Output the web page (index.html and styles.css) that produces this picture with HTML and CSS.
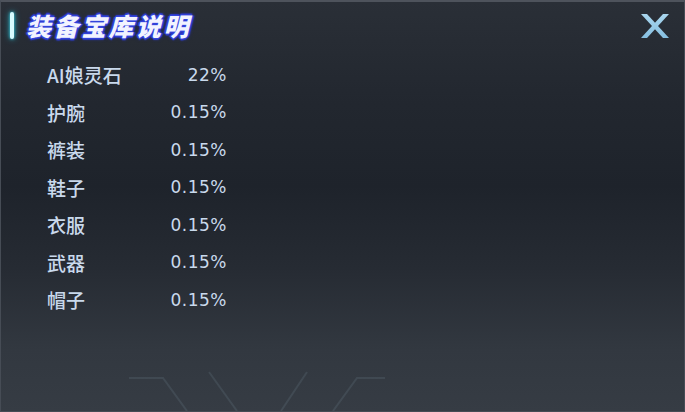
FILE: index.html
```html
<!DOCTYPE html>
<html lang="zh-CN">
<head>
    <meta charset="UTF-8">
    <meta name="viewport" content="width=device-width, initial-scale=1.0">
    <title>装备宝库说明</title>
    <link rel="stylesheet" href="styles.css">
</head>
<body>
    <div class="panel">
        <div class="header">
            <span class="accent"></span>
            <h1 class="title">装备宝库说明</h1>
            <button class="close" aria-label="关闭">
                <svg width="32" height="26" viewBox="0 0 32 26">
                    <defs>
                        <linearGradient id="xg" x1="0" y1="0" x2="0" y2="1">
                            <stop offset="0" stop-color="#a9d6ee"/>
                            <stop offset="1" stop-color="#86bfe0"/>
                        </linearGradient>
                    </defs>
                    <polygon points="2,1 8,1 30,25 24,25" fill="url(#xg)"/>
                    <polygon points="24,1 30,1 8,25 2,25" fill="url(#xg)"/>
                </svg>
            </button>
        </div>

        <ul class="rates">
            <li><span class="name">AI娘灵石</span><span class="value">22%</span></li>
            <li><span class="name">护腕</span><span class="value">0.15%</span></li>
            <li><span class="name">裤装</span><span class="value">0.15%</span></li>
            <li><span class="name">鞋子</span><span class="value">0.15%</span></li>
            <li><span class="name">衣服</span><span class="value">0.15%</span></li>
            <li><span class="name">武器</span><span class="value">0.15%</span></li>
            <li><span class="name">帽子</span><span class="value">0.15%</span></li>
        </ul>

        <!-- faint circuit lines along the bottom edge -->
        <svg class="circuit" width="685" height="45" viewBox="0 0 685 45">
            <g fill="none" stroke="rgba(150,175,195,0.13)" stroke-width="2">
                <polyline points="128,12 162,12 186,45"/>
                <line x1="208" y1="6" x2="236" y2="45"/>
                <line x1="306" y1="6" x2="280" y2="45"/>
                <polyline points="384,12 356,12 332,45"/>
            </g>
        </svg>
    </div>
</body>
</html>
```

FILE: styles.css
```css
body {
    margin: 0;
    padding: 0;
    background: #1e232b;
    font-family: "DejaVu Sans", "Noto Sans CJK SC", sans-serif;
}

.panel {
    position: relative;
    width: 685px;
    height: 412px;
    box-sizing: border-box;
    border: 1px solid #464c55;
    border-top: 2px solid #4e535c;
    background: linear-gradient(180deg, #2a2f37 0%, #22272f 25%, #1e232b 45%, #262b33 65%, #323840 85%, #363c44 100%);
    overflow: hidden;
}

.header {
    display: flex;
    align-items: center;
    height: 46px;
    padding-left: 9px;
}

.accent {
    width: 4px;
    height: 27px;
    margin-top: 1px;
    border-radius: 2px;
    background: #d8fbff;
    box-shadow: 0 0 3px #3fd3e6, 0 0 6px #27a9c0;
}

.title {
    margin: 0 0 0 12px;
    font-family: "Noto Sans CJK SC", sans-serif;
    font-size: 25px;
    font-weight: 900;
    font-style: italic;
    letter-spacing: 2.5px;
    color: #f2f3ff;
    text-shadow:
        1px 0 0 #3444dc, -1px 0 0 #3444dc, 0 1px 0 #3444dc, 0 -1px 0 #3444dc,
        2px 0 1px #2c3bd0, -2px 0 1px #2c3bd0, 0 2px 1px #2c3bd0, 0 -2px 1px #2c3bd0,
        0 0 4px #2a39c8;
}

.close {
    margin-left: auto;
    margin-right: 13px;
    margin-top: 2px;
    padding: 0;
    border: none;
    background: none;
    cursor: pointer;
}

.close svg {
    display: block;
}

.rates {
    list-style: none;
    margin: 8px 0 0;
    padding: 0 0 0 46px;
}

.rates li {
    display: flex;
    align-items: center;
    height: 37.5px;
    color: #c9d9ec;
}

.name {
    width: 120px;
    font-family: "Noto Sans CJK SC", sans-serif;
    font-size: 19px;
    font-weight: 500;
}

.value {
    width: 60px;
    text-align: right;
    font-size: 17px;
    letter-spacing: 0.5px;
}

.circuit {
    position: absolute;
    left: 0;
    bottom: 0;
}
```
